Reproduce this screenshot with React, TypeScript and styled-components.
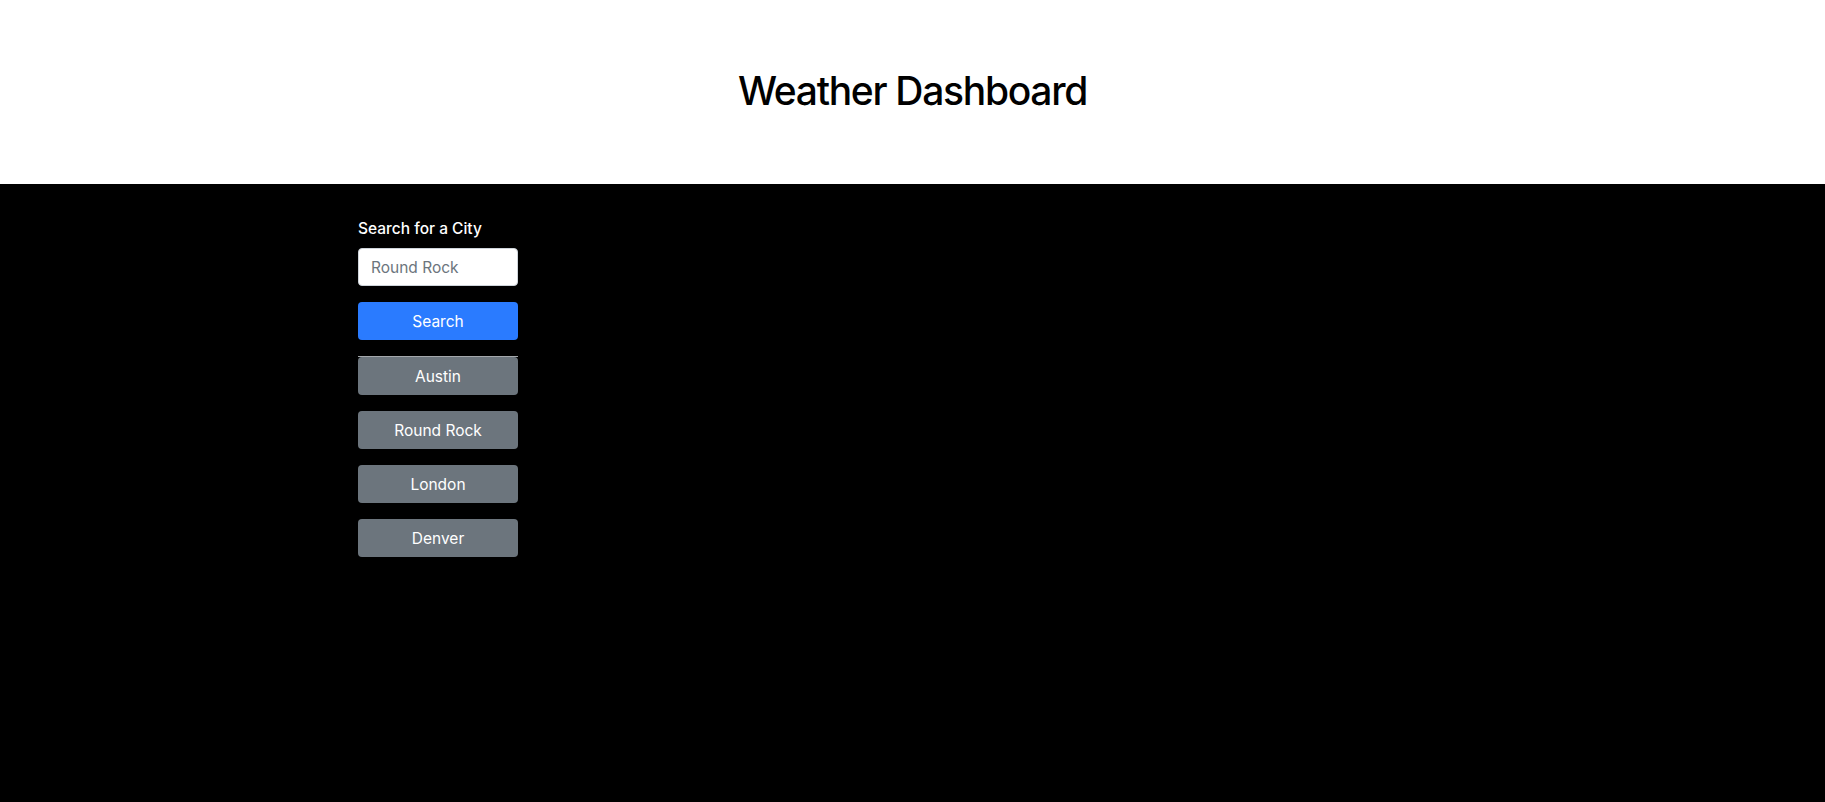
import React from "react";
import styled, { createGlobalStyle } from "styled-components";

const Global = createGlobalStyle`
  html, body { margin: 0; padding: 0; background: #000; }
  body { font-family: Inter, "Liberation Sans", Arial, sans-serif; }
  * { box-sizing: border-box; }
`;

const Page = styled.div`
  min-height: 802px;
  display: flex;
  flex-direction: column;
  background: #000;
`;

const Header = styled.header`
  height: 184px;
  background: #fff;
  display: flex;
  align-items: center;
  justify-content: center;
  padding-bottom: 2px;
`;

const Title = styled.h1`
  margin: 0;
  font-size: 39px;
  font-weight: 500;
  letter-spacing: -1.3px;
  color: #000;
  line-height: 1.2;
`;

const Main = styled.main`
  flex: 1;
  padding: 33px 0 0 358px;
`;

const Sidebar = styled.aside`
  width: 160px;
  display: flex;
  flex-direction: column;
`;

const Label = styled.label`
  color: #fff;
  font-size: 15.5px;
  font-weight: 500;
  line-height: 24px;
  margin-bottom: 7px;
`;

const Input = styled.input`
  height: 38px;
  width: 100%;
  border: 1px solid #ced4da;
  border-radius: 4px;
  padding: 6px 12px;
  font-size: 15.5px;
  font-family: inherit;
  color: #212529;
  background: #fff;
  &::placeholder { color: #6c757d; }
`;

const Button = styled.button<{ $variant: "primary" | "secondary" }>`
  height: 38px;
  width: 100%;
  border: none;
  border-radius: 4px;
  font-size: 15.5px;
  font-family: inherit;
  color: #fff;
  background: ${(p) => (p.$variant === "primary" ? "#2a7bff" : "#6c757d")};
  cursor: pointer;
`;

const SearchButton = styled(Button)`
  margin-top: 16px;
`;

const History = styled.div`
  margin-top: 16px;
  border-top: 1px solid #a4a8ac;
  display: flex;
  flex-direction: column;
  gap: 16px;
`;

const cities = ["Austin", "Round Rock", "London", "Denver"];

export default function App() {
  return (
    <>
      <Global />
      <Page>
        <Header>
          <Title>Weather Dashboard</Title>
        </Header>
        <Main>
          <Sidebar>
            <Label htmlFor="city">Search for a City</Label>
            <Input id="city" placeholder="Round Rock" />
            <SearchButton $variant="primary">Search</SearchButton>
            <History>
              {cities.map((c) => (
                <Button key={c} $variant="secondary">
                  {c}
                </Button>
              ))}
            </History>
          </Sidebar>
        </Main>
      </Page>
    </>
  );
}
